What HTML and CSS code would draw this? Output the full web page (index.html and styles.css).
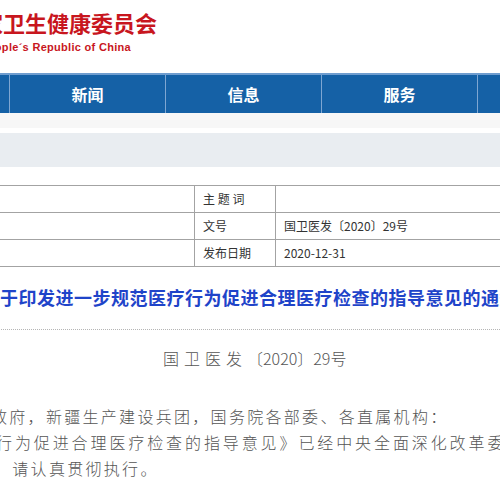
FILE: index.html
```html
<!DOCTYPE html>
<html lang="zh">
<head>
<meta charset="utf-8">
<link rel="stylesheet" href="styles.css">
</head>
<body>
<div class="page">
  <header class="masthead">
    <div class="logo-cn">国家卫生健康委员会</div>
    <div class="logo-en"><span>National Health Commission of the People´s Republic of China</span></div>
  </header>
  <nav class="nav">
    <a class="nav-item">首页</a>
    <a class="nav-item">新闻</a>
    <a class="nav-item">信息</a>
    <a class="nav-item">服务</a>
    <a class="nav-item">互动</a>
  </nav>
  <div class="strip"></div>
  <div class="band"></div>

  <table class="meta">
    <tr><td class="c1"></td><td class="c2">主 题 词</td><td class="c3"></td></tr>
    <tr><td class="c1"></td><td class="c2">文号</td><td class="c3">国卫医发〔2020〕29号</td></tr>
    <tr><td class="c1"></td><td class="c2">发布日期</td><td class="c3">2020-12-31</td></tr>
  </table>

  <h1 class="title">关于印发进一步规范医疗行为促进合理医疗检查的指导意见的通知</h1>

  <div class="docno"><span class="wide">国卫医发</span>〔2020〕29号</div>

  <div class="body-text">
    <div class="line l1">政府，新疆生产建设兵团，国务院各部委、各直属机构：</div>
    <div class="line l2">行为促进合理医疗检查的指导意见》已经中央全面深化改革委员会审议通过。</div>
    <div class="line l3">，请认真贯彻执行。</div>
  </div>
</div>
</body>
</html>
```

FILE: styles.css
```css
html, body {
  margin: 0;
  padding: 0;
  background: #fff;
}
body {
  width: 500px;
  height: 500px;
  overflow: hidden;
  font-family: "Noto Sans CJK SC", "Liberation Sans", sans-serif;
}
.page {
  width: 500px;
}
.masthead {
  height: 73px;
  padding-top: 9px;
  box-sizing: border-box;
}
.logo-cn {
  margin-left: -41px;
  white-space: nowrap;
  font-size: 22px;
  line-height: 26px;
  font-weight: 700;
  color: #c8161e;
}
.logo-en {
  display: flex;
  justify-content: flex-end;
  width: 131px;
  margin-top: 5px;
  white-space: nowrap;
  font-family: "Liberation Sans", Arial, sans-serif;
  font-size: 11px;
  line-height: 14px;
  font-weight: 700;
  letter-spacing: 0.3px;
  color: #c8161e;
}
.nav {
  display: flex;
  height: 40px;
  border-top: 2px solid #6f9dcf;
  box-sizing: border-box;
  background: #1561a6;
  margin-left: -146px;
  width: 800px;
}
.nav-item {
  flex: 0 0 156px;
  box-sizing: border-box;
  border-right: 1px solid #7ea6d2;
  color: #fff;
  font-size: 16px;
  font-weight: 700;
  line-height: 38px;
  text-align: center;
}
.strip {
  height: 15px;
  background: #f7f7f7;
}
.band {
  height: 34px;
  margin-top: 5px;
  background: #e9edf1;
}
.meta {
  margin-top: 18px;
  margin-left: -1px;
  width: 502px;
  border-collapse: collapse;
  font-size: 12px;
  color: #333;
}
.meta td {
  height: 26px;
  padding: 0 0 0 8px;
  border: 1px solid #a3a3a3;
  line-height: 26px;
}
.meta .c1 { width: 186px; }
.meta .c2 { width: 72px; }
.title {
  margin: 18px 0 0 -18.5px;
  padding-bottom: 20px;
  width: 540px;
  white-space: nowrap;
  font-size: 18px;
  line-height: 24px;
  font-weight: 700;
  letter-spacing: 0.5px;
  color: #1f44c9;
  border-bottom: 1px dotted #b5b5b5;
}
.docno {
  margin-top: 16px;
  padding-left: 163px;
  white-space: nowrap;
  font-size: 16px;
  line-height: 24px;
  font-weight: 300;
  color: #555;
}
.wide {
  letter-spacing: 5px;
}
.body-text {
  margin-top: 33px;
  font-size: 16px;
  line-height: 26px;
  font-weight: 300;
  color: #555;
  letter-spacing: 2.3px;
}
.line {
  white-space: nowrap;
}
.l1 { margin-left: -9px; }
.l2 { margin-left: -4px; letter-spacing: 2.9px; }
.l3 { margin-left: -6px; }
```
